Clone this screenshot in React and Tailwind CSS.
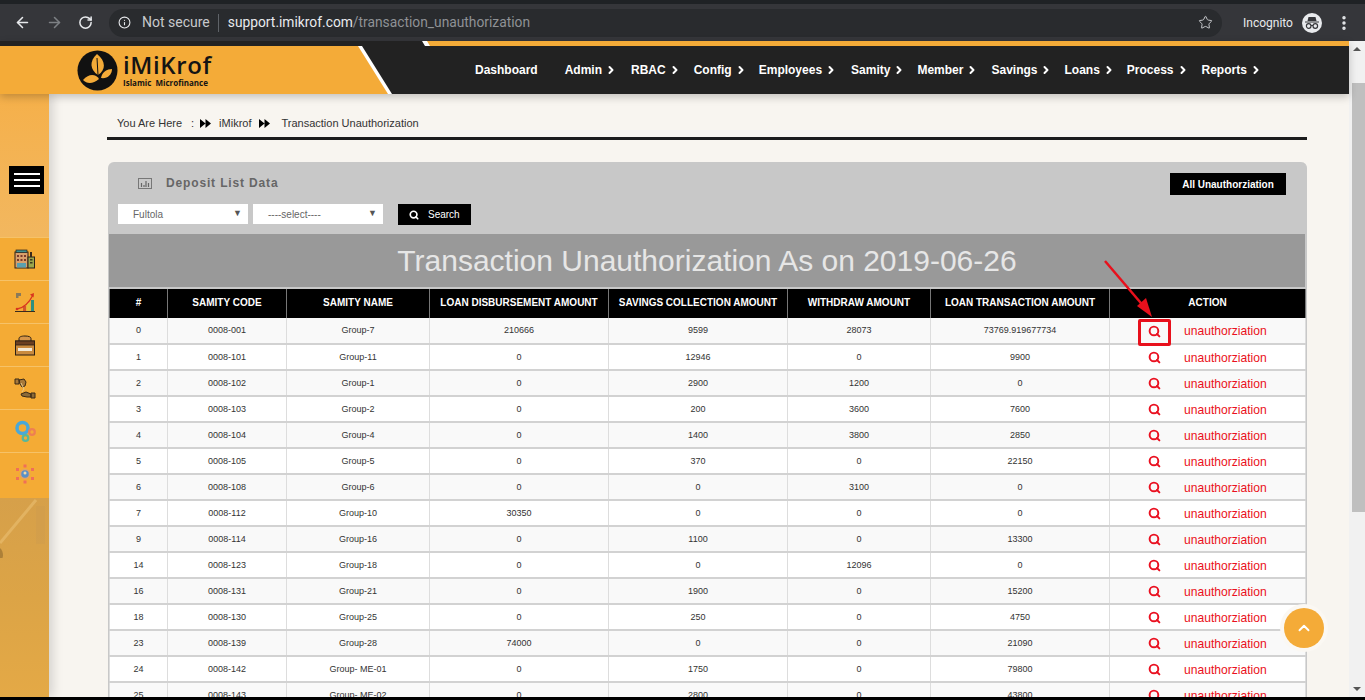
import React from "react";
import { ArrowLeft, ArrowRight, RotateCw, Info, Star, Search, ChevronUp, ChevronRight, MoreVertical } from "lucide-react";

const rows = [
  ["0", "0008-001", "Group-7", "210666", "9599", "28073", "73769.919677734"],
  ["1", "0008-101", "Group-11", "0", "12946", "0", "9900"],
  ["2", "0008-102", "Group-1", "0", "2900", "1200", "0"],
  ["3", "0008-103", "Group-2", "0", "200", "3600", "7600"],
  ["4", "0008-104", "Group-4", "0", "1400", "3800", "2850"],
  ["5", "0008-105", "Group-5", "0", "370", "0", "22150"],
  ["6", "0008-108", "Group-6", "0", "0", "3100", "0"],
  ["7", "0008-112", "Group-10", "30350", "0", "0", "0"],
  ["9", "0008-114", "Group-16", "0", "1100", "0", "13300"],
  ["14", "0008-123", "Group-18", "0", "0", "12096", "0"],
  ["16", "0008-131", "Group-21", "0", "1900", "0", "15200"],
  ["18", "0008-130", "Group-25", "0", "250", "0", "4750"],
  ["23", "0008-139", "Group-28", "74000", "0", "0", "21090"],
  ["24", "0008-142", "Group- ME-01", "0", "1750", "0", "79800"],
  ["25", "0008-143", "Group- ME-02", "0", "2800", "0", "43800"],
];

const heads = [
  ["#", "w-[58px]"],
  ["SAMITY CODE", "w-[119px]"],
  ["SAMITY NAME", "w-[143px]"],
  ["LOAN DISBURSEMENT AMOUNT", "w-[179px]"],
  ["SAVINGS COLLECTION AMOUNT", "w-[179px]"],
  ["WITHDRAW AMOUNT", "w-[143px]"],
  ["LOAN TRANSACTION AMOUNT", "w-[179px]"],
  ["ACTION", "w-[196px]"],
];

const nav = [
  ["Admin", "mr-[14px]"],
  ["RBAC", "mr-[13px]"],
  ["Config", "mr-[12px]"],
  ["Employees", "mr-[14px]"],
  ["Samity", "mr-[12px]"],
  ["Member", "mr-[13px]"],
  ["Savings", "mr-[12px]"],
  ["Loans", "mr-[12px]"],
  ["Process", "mr-[13px]"],
  ["Reports", "mr-0"],
];

const Building = () => (
  <svg width="22" height="20" viewBox="0 0 22 20">
    <rect x="1" y="3" width="13" height="16" fill="#d9a06b" stroke="#2b2118" strokeWidth="1" />
    <rect x="2" y="1" width="11" height="2.5" fill="#3f8f8f" stroke="#2b2118" strokeWidth=".7" />
    <rect x="14" y="8" width="6.5" height="11" fill="#9aa64c" stroke="#2b2118" strokeWidth="1" />
    <path d="M3 6h2v2H3zM6.5 6h2v2h-2zM10 6h2v2h-2zM3 10h2v2H3zM6.5 10h2v2h-2zM10 10h2v2h-2z" fill="#7a3b2c" />
    <path d="M3 14h9v4.500H3z" fill="#5aa0b0" />
    <path d="M16 10h2.500v1.500H16zM16 13h2.500v1.500H16z" fill="#3c3a20" />
    <path d="M16 3h2v5h-2z" fill="#3a2a1c" />
  </svg>
);
const Growth = () => (
  <svg width="22" height="22" viewBox="0 0 22 22">
    <path d="M1 20.500h20" stroke="#3a2a1c" strokeWidth="1" />
    <rect x="17" y="9" width="3" height="11" fill="#2f8f80" />
    <rect x="13" y="12" width="3" height="8" fill="#e3c23a" />
    <rect x="9" y="15" width="3" height="5" fill="#d2572c" />
    <path d="M3 18C10 17 15 12 19 4" fill="none" stroke="#d8341f" strokeWidth="1.300" />
    <path d="M16 3.500l4-1.500-.5 4.500z" fill="#d8341f" />
    <circle cx="3" cy="18" r="1.300" fill="#d8341f" />
    <rect x="2" y="2" width="5" height="3" fill="#8a7a5a" />
    <rect x="2" y="5" width="2.500" height="2" fill="#8a7a5a" />
  </svg>
);
const Toolbox = () => (
  <svg width="22" height="21" viewBox="0 0 22 21">
    <path d="M5 6V3.500C5 2 7 1 11 1s6 1 6 2.500V6" fill="#d6954a" stroke="#2b1f14" strokeWidth="1" />
    <rect x="1.500" y="6" width="19" height="14" fill="#c98a3e" stroke="#2b1f14" strokeWidth="1" />
    <rect x="1.500" y="6" width="19" height="4" fill="#6b3f20" stroke="#2b1f14" strokeWidth=".8" />
    <path d="M4 14.500h14" stroke="#f4ead8" strokeWidth="3" />
  </svg>
);
const Hands = () => (
  <svg width="22" height="22" viewBox="0 0 22 22">
    <path d="M1 2h4v5H1zM5 3l5-1 2 3-1 4-3 1-2-3z" fill="#a7793a" stroke="#3a2a16" strokeWidth="1" />
    <path d="M7 6l3 6-2 3" fill="none" stroke="#e8c888" strokeWidth="1" />
    <path d="M21 21v-5h-4v5zM17 17l-5-2-5 2 1 2 5 1 4 0z" fill="#8b6a38" stroke="#3a2a16" strokeWidth="1" />
  </svg>
);
const Gears = () => (
  <svg width="22" height="22" viewBox="0 0 22 22">
    <circle cx="8.500" cy="8" r="5.500" fill="none" stroke="#4aa8d8" strokeWidth="3.500" />
    <circle cx="18" cy="12" r="2.800" fill="none" stroke="#ee7f52" strokeWidth="2.200" />
    <circle cx="11.500" cy="18" r="2.800" fill="none" stroke="#58b79a" strokeWidth="2.200" />
  </svg>
);
const Network = () => (
  <svg width="22" height="22" viewBox="0 0 22 22">
    <circle cx="11" cy="11" r="4.500" fill="#5a90c8" stroke="#e2a268" strokeWidth="1.500" />
    <circle cx="11" cy="10" r="1.500" fill="#f0d8a8" />
    <path d="M9.500 1.500h3v3h-3zM9.500 17.500h3v3h-3zM2 5h3v3H2zM17 5h3v3h-3zM2 14h3v3H2zM17 14h3v3h-3z" fill="#ef6f58" />
  </svg>
);

const sideIcons = [Building, Growth, Toolbox, Hands, Gears, Network];

const DoubleArrow = ({ className }) => (
  <svg className={className} width="11" height="9" viewBox="0 0 11 9">
    <path d="M0 0l5.500 4.500L0 9zM5.500 0L11 4.500 5.500 9z" fill="#000" />
  </svg>
);

function Chrome() {
  return (
    <div className="h-[41px] shrink-0 flex flex-col bg-[#35363a]">
      <div className="h-[4px] bg-[#1f2225]" />
      <div className="flex-1 flex items-center text-white font-['Roboto',sans-serif]">
        <ArrowLeft className="ml-[14px] text-[#e8eaed]" size={17} strokeWidth={2.2} />
        <ArrowRight className="ml-[15px] text-[#7d8084]" size={17} strokeWidth={2.2} />
        <RotateCw className="ml-[15px] text-[#e8eaed]" size={15} strokeWidth={2.4} />
        <div className="ml-[16px] h-[28px] w-[1113px] rounded-full bg-[#292b2e] flex items-center">
          <Info className="ml-[9px] text-[#e8eaed]" size={13} strokeWidth={2} />
          <span className="ml-[11px] text-[14px] text-[#c7c9cc]">Not secure</span>
          <span className="ml-[8px] h-[18px] w-px bg-[#5f6368]" />
          <span className="ml-[9px] text-[13.800px] text-[#e8eaed]">
            support.imikrof.com<span className="text-[#8f9296]">/transaction_unauthorization</span>
          </span>
          <Star className="ml-auto mr-[9px] text-[#c7c9cc]" size={15} strokeWidth={1.6} />
        </div>
        <span className="ml-[21px] w-[50px] text-[12px] text-[#e8eaed] whitespace-nowrap">Incognito</span>
        <span className="ml-[9px] w-[20px] h-[20px] rounded-full bg-[#e8eaed] flex items-center justify-center">
          <svg width="16" height="14" viewBox="0 0 16 14">
            <path d="M4.500 1h7l1 4h-9zM1 5.500h14v1H1z" fill="#35363a" />
            <circle cx="4.700" cy="10" r="2.300" fill="none" stroke="#35363a" strokeWidth="1.200" />
            <circle cx="11.300" cy="10" r="2.300" fill="none" stroke="#35363a" strokeWidth="1.200" />
            <path d="M7 9.500h2" stroke="#35363a" strokeWidth="1.200" />
          </svg>
        </span>
        <MoreVertical className="ml-[13px] text-[#e8eaed]" size={18} strokeWidth={2.6} />
      </div>
    </div>
  );
}

function Header() {
  return (
    <div className="relative h-[53px] shrink-0 bg-[#222222] shadow-[0_3px_8px_rgba(0,0,0,0.22)] z-10 font-['Liberation_Sans',sans-serif]">
      <div className="absolute left-[422px] right-0 top-0 h-[5px] bg-white [clip-path:polygon(0_0,6px_0,9px_100%,3px_100%)]" />
      <div className="absolute left-[427px] right-0 top-0 h-[5px] bg-[#f4ab38] [clip-path:polygon(0_0,100%_0,100%_100%,3px_100%)]" />
      <div className="absolute left-0 top-[5px] h-[48px] w-[392px] bg-white [clip-path:polygon(0_0,362px_0,392px_100%,0_100%)]" />
      <div className="absolute left-0 top-[5px] h-[48px] w-[388px] bg-[#f4ab38] [clip-path:polygon(0_0,358px_0,388px_100%,0_100%)]" />
      <div className="relative h-full flex items-center pt-[5px]">
        <div className="ml-[77px] w-[398px] shrink-0 flex items-center">
          <svg width="41" height="41" viewBox="0 0 41 41">
            <circle cx="20.500" cy="20.500" r="20" fill="#111" />
            <path d="M20 4C29 11 29 20 21 25C13 20 12 11 20 4Z" fill="#f4ab38" />
            <path d="M6 30C12 23 19 24 22 29C16 34 10 34 6 30Z" fill="#f4ab38" />
            <path d="M24 28C25 22 30 19 35 19C35 25 30 29 24 28Z" fill="#f4ab38" />
            <path d="M20 8L21 25" stroke="#111" strokeWidth="1" />
          </svg>
          <div className="ml-[5px] flex flex-col text-[#141414] font-['Open_Sans',sans-serif]">
            <span className="text-[24px] leading-[24px] font-semibold tracking-[0.6px]">iMiKrof</span>
            <span className="mt-[1px] text-[8px] leading-[10px] font-bold whitespace-nowrap">Islamic&nbsp; Microfinance</span>
          </div>
        </div>
        <span className="text-[12px] font-bold text-white whitespace-nowrap">Dashboard</span>
        <div className="ml-[27px] flex items-center">
          {nav.map(([label, mr]) => (
            <span key={label} className={`flex items-center ${mr}`}>
              <span className="text-[12px] font-bold text-white whitespace-nowrap">{label}</span>
              <ChevronRight className="ml-[3px] text-white" size={12} strokeWidth={4} />
            </span>
          ))}
        </div>
      </div>
    </div>
  );
}

function Sidebar() {
  return (
    <div className="w-[49px] shrink-0 flex flex-col overflow-hidden shadow-[4px_0_10px_rgba(0,0,0,0.14)] z-[1]">
      <div className="h-[143px] shrink-0 bg-gradient-to-b from-[#f5b04a] to-[#f2b75f] pt-[72px] pl-[9px]">
        <div className="w-[35px] h-[28px] bg-black flex flex-col items-center justify-center gap-[4px]">
          <span className="w-[26px] h-[2px] bg-white" />
          <span className="w-[26px] h-[2px] bg-white" />
          <span className="w-[26px] h-[2px] bg-white" />
        </div>
      </div>
      {sideIcons.map((Icon, i) => (
        <div key={i} className="h-[43px] shrink-0 bg-[#f4ab35] border-t border-[#f6c268] flex items-center justify-center">
          <Icon />
        </div>
      ))}
      <div className="h-[3px] shrink-0 bg-[#f4ab35]" />
      <div className="flex-1 bg-gradient-to-b from-[#d6a04a] via-[#dca446] to-[#e4a946]">
        <svg width="49" height="60" viewBox="0 0 49 60">
          <path d="M0 45L36 2" stroke="#e8bb6c" strokeWidth="3" opacity=".7" />
          <path d="M36 8h9v38h-9z" fill="#cf9c4c" opacity=".55" />
          <path d="M0 60V50c4 4 4 10 0 14z" fill="#9a7232" opacity=".7" />
        </svg>
      </div>
    </div>
  );
}

function Table() {
  return (
    <table className="w-[1196px] table-fixed border-collapse font-['Liberation_Sans',sans-serif]">
      <thead>
        <tr className="h-[29px] bg-black">
          {heads.map(([h, w]) => (
            <th key={h} className={`${w} border-x border-[#777] text-white text-[10px] font-bold text-center p-0 pb-[2px]`}>{h}</th>
          ))}
        </tr>
      </thead>
      <tbody>
        {rows.map((r, i) => (
          <tr key={r[0]} className={`h-[26px] ${i % 2 === 0 ? "bg-[#f9f9f9]" : "bg-white"} border-b-2 border-[#d2d2d2]`}>
            {r.map((c, j) => (
              <td key={j} className="border-x border-[#dddddd] text-[9px] text-[#333] text-center p-0 pt-[1px]">{c}</td>
            ))}
            <td className="border-x border-[#dddddd] p-0 pt-[2px]">
              <div className="flex items-center text-[#ea1020]">
                <Search className="ml-[38px]" size={13} strokeWidth={3.6} />
                <span className="ml-[23px] text-[12.100px]">unauthorziation</span>
              </div>
            </td>
          </tr>
        ))}
      </tbody>
    </table>
  );
}

function Content() {
  return (
    <div className="relative flex-1 overflow-hidden bg-[#f8f5f0] pl-[58px] font-['Liberation_Sans',sans-serif]">
      <div className="w-[1200px] h-[46px] border-b-[3px] border-[#1c1c1c] flex items-center pl-[10px] pt-[15px] text-[11px] text-[#333]">
        <span>You Are Here</span>
        <span className="ml-[9px]">:</span>
        <DoubleArrow className="ml-[6px]" />
        <span className="ml-[8px]">iMikrof</span>
        <DoubleArrow className="ml-[8px]" />
        <span className="ml-[11px]">Transaction Unauthorization</span>
      </div>
      <div className="mt-[22px] ml-[1px] w-[1199px] bg-[#c8c8c8] rounded-t-[6px] px-[1px] pb-0 border-r border-[#c8c8c8]">
        <div className="h-[72px] relative">
          <div className="flex items-center h-[42px] pl-[29px]">
            <svg width="14" height="11" viewBox="0 0 14 11" className="shrink-0">
              <rect x=".5" y=".5" width="13" height="10" fill="none" stroke="#777" />
              <path d="M3.500 5v4M6 7v2M8 3v6M10.500 5v4" stroke="#666" strokeWidth="1.200" />
            </svg>
            <span className="ml-[14px] text-[12px] font-bold text-[#666] tracking-[0.85px]">Deposit List Data</span>
          </div>
          <div className="flex items-start pl-[9px]">
            <div className="w-[130px] h-[20px] bg-white flex items-center justify-between pl-[15px] pr-[6px] text-[10px] text-[#666]">
              <span>Fultola</span><span className="text-[#555] text-[9px]">▼</span>
            </div>
            <div className="ml-[5px] w-[130px] h-[20px] bg-white flex items-center justify-between pl-[15px] pr-[6px] text-[10px] text-[#666]">
              <span>----select----</span><span className="text-[#555] text-[9px]">▼</span>
            </div>
            <div className="ml-[15px] w-[73px] h-[21px] bg-black flex items-center pl-[11px] text-white text-[10px]">
              <Search size={10} strokeWidth={4} />
              <span className="ml-[9px]">Search</span>
            </div>
            <div className="absolute right-[19px] top-[11px] w-[116px] h-[22px] bg-black flex items-center justify-center text-white text-[10px] font-bold">All Unauthorziation</div>
          </div>
        </div>
        <div className="h-[53px] bg-[#999999] flex items-center justify-center text-[#e6e6e6] text-[30px] leading-none">
          Transaction Unauthorization As on 2019-06-26
        </div>
        <div className="mt-[2px]">
          <Table />
        </div>
      </div>
      {/* Annotation drawn over the table */}
      <svg className="absolute left-[1050px] top-[165px]" width="60" height="62" viewBox="0 0 60 62">
        <path d="M6 2L47 50" stroke="#e8101c" strokeWidth="2.500" />
        <path d="M53 58L38 47L47 39Z" fill="#e8101c" />
      </svg>
      <div className="absolute left-[1089px] top-[225px] w-[33px] h-[27px] border-[3px] border-[#e8101c] rounded-[2px]" />
      <div className="absolute left-[1231px] top-[510px] w-[48px] h-[48px] rounded-full bg-[#fbf8f3] flex items-center justify-center">
        <div className="w-[40px] h-[40px] rounded-full bg-[#f4ab38] flex items-center justify-center text-white">
          <ChevronUp size={18} strokeWidth={2.500} />
        </div>
      </div>
    </div>
  );
}

function Scrollbar() {
  return (
    <div className="w-[16px] shrink-0 bg-[#f1f1f1] flex flex-col items-center">
      <div className="mt-[6px] w-0 h-0 border-x-[4px] border-x-transparent border-b-[4px] border-b-[#555]" />
      <div className="mt-[32px] ml-[3px] w-[13px] h-[429px] bg-[#bfbfbf]" />
      <div className="mt-auto mb-[6px] w-0 h-0 border-x-[4px] border-x-transparent border-t-[4px] border-t-[#555]" />
    </div>
  );
}

export default function App() {
  return (
    <div className="w-[1365px] h-[700px] overflow-hidden flex flex-col bg-black">
      <Chrome />
      <div className="h-[656px] flex shrink-0">
        <div className="flex-1 flex flex-col min-w-0">
          <Header />
          <div className="flex-1 flex min-h-0">
            <Sidebar />
            <Content />
          </div>
        </div>
        <Scrollbar />
      </div>
    </div>
  );
}
